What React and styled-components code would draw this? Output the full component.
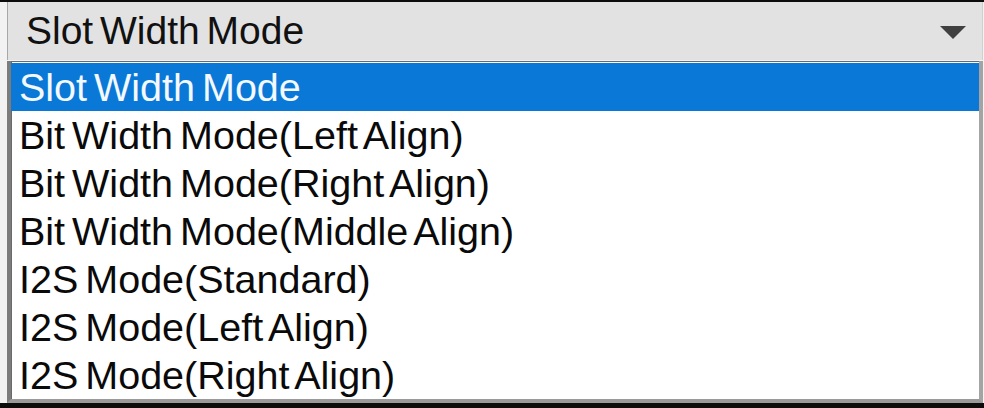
import React from "react";
import styled, { createGlobalStyle } from "styled-components";

const GlobalStyle = createGlobalStyle`
  html, body {
    margin: 0;
    padding: 0;
    background: #0c0c0c;
  }
`;

const Screen = styled.div`
  width: 984px;
  height: 408px;
  background: #0c0c0c;
  padding-top: 2px;
  box-sizing: border-box;
  overflow: hidden;
  font-family: "Liberation Sans", Arial, sans-serif;
`;

const Panel = styled.div`
  height: 401px;
  background: #f2f2f2;
  padding-left: 7px;
  padding-right: 1px;
  display: flex;
  flex-direction: column;
`;

const Combo = styled.div`
  height: 58px;
  flex: none;
  display: flex;
  align-items: center;
  justify-content: space-between;
  background: #e2e2e2;
  border-left: 1px solid #a8a8a8;
  border-right: 1px solid #d0d0d0;
  padding: 0 16px 0 18px;
  font-size: 39px;
  word-spacing: -4px;
  color: #111;
`;

const Arrow = styled.svg`
  width: 26px;
  height: 13px;
  margin-top: 2px;
`;

const List = styled.ul`
  flex: 1;
  list-style: none;
  margin: 1px 0 0;
  padding: 2px 0 0;
  background: #ffffff;
  border: 4px solid #8e8e8e;
  border-top: 0;
  border-left-color: #7c7c7c;
  border-right-color: #a4a4a4;
  border-bottom-color: #9a9a9a;
  box-shadow: inset 1px 1px 0 #6a6a6a;
  overflow: hidden;
`;

const Item = styled.li`
  height: 48px;
  display: flex;
  align-items: center;
  padding-left: 8px;
  font-size: 39.5px;
  word-spacing: -4px;
  white-space: nowrap;
  background: ${(p) => (p.$selected ? "#0a78d6" : "transparent")};
  color: ${(p) => (p.$selected ? "#f4f8ff" : "#0a0a0a")};
`;

const options = [
  "Slot Width Mode",
  "Bit Width Mode(Left Align)",
  "Bit Width Mode(Right Align)",
  "Bit Width Mode(Middle Align)",
  "I2S Mode(Standard)",
  "I2S Mode(Left Align)",
  "I2S Mode(Right Align)",
];

export default function App() {
  const selected = 0;
  return (
    <>
      <GlobalStyle />
      <Screen>
        <Panel>
          <Combo>
            <span>{options[selected]}</span>
            <Arrow viewBox="0 0 26 13">
              <path d="M0 0 H26 L13 13 Z" fill="#404040" />
            </Arrow>
          </Combo>
          <List>
            {options.map((o, i) => (
              <Item key={o} $selected={i === selected}>
                {o}
              </Item>
            ))}
          </List>
        </Panel>
      </Screen>
    </>
  );
}
